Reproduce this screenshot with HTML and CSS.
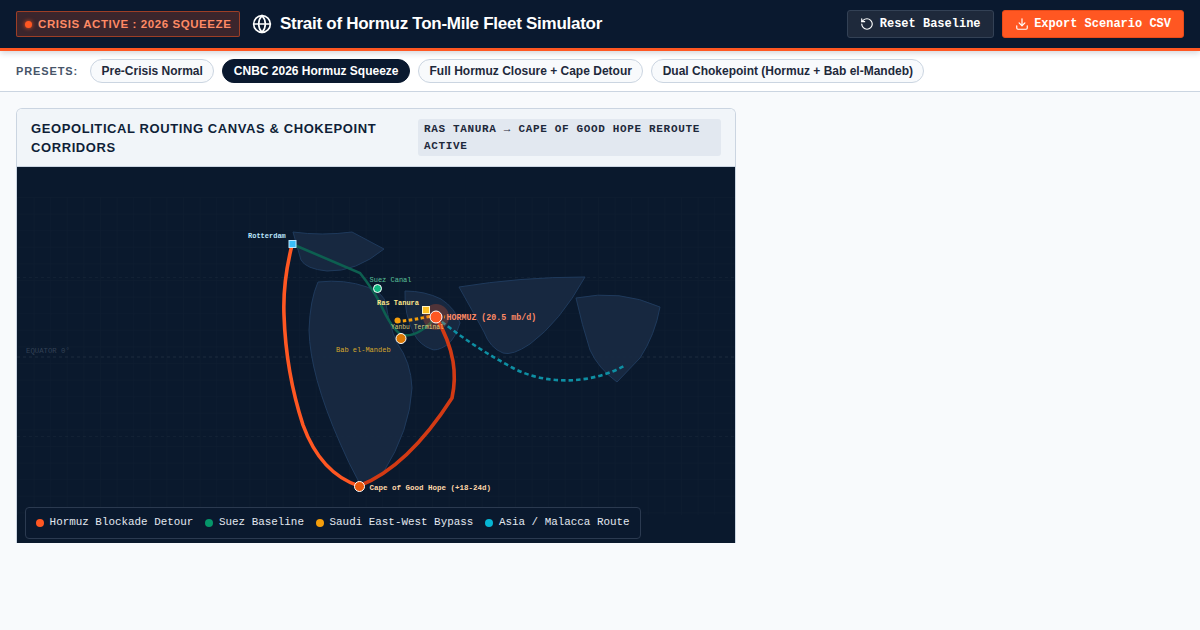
FILE: index.html
```html
<!DOCTYPE html>
<html lang="en">

<head>
    <meta charset="UTF-8" />
    <meta name="viewport" content="width=device-width, initial-scale=1.0" />
    <title>Strait of Hormuz Ton-Mile Fleet Simulator</title>
    <link rel="stylesheet" href="styles.css">
</head>

<body>

    <header class="top-bar">
        <div class="top-left">
            <span class="crisis-badge"><i class="pulse-dot"></i>CRISIS ACTIVE : 2026 SQUEEZE</span>
            <h1 class="app-title">
                <svg class="globe" viewBox="0 0 24 24" width="20" height="20" fill="none" stroke="currentColor"
                    stroke-width="2" stroke-linecap="round" stroke-linejoin="round">
                    <circle cx="12" cy="12" r="10" />
                    <path d="M12 2a14.5 14.5 0 0 0 0 20 14.5 14.5 0 0 0 0-20" />
                    <path d="M2 12h20" />
                </svg>
                Strait of Hormuz Ton-Mile Fleet Simulator
            </h1>
        </div>
        <div class="top-actions">
            <button class="btn btn-dark">
                <svg viewBox="0 0 24 24" width="14" height="14" fill="none" stroke="currentColor" stroke-width="2"
                    stroke-linecap="round" stroke-linejoin="round">
                    <path d="M3 12a9 9 0 1 0 9-9 9.75 9.75 0 0 0-6.74 2.74L3 8" />
                    <path d="M3 3v5h5" />
                </svg>
                Reset Baseline
            </button>
            <button class="btn btn-orange">
                <svg viewBox="0 0 24 24" width="14" height="14" fill="none" stroke="currentColor" stroke-width="2"
                    stroke-linecap="round" stroke-linejoin="round">
                    <path d="M21 15v4a2 2 0 0 1-2 2H5a2 2 0 0 1-2-2v-4" />
                    <path d="M7 10l5 5 5-5" />
                    <path d="M12 15V3" />
                </svg>
                Export Scenario CSV
            </button>
        </div>
    </header>

    <nav class="preset-bar">
        <span class="preset-label">PRESETS:</span>
        <button class="pill">Pre-Crisis Normal</button>
        <button class="pill active">CNBC 2026 Hormuz Squeeze</button>
        <button class="pill">Full Hormuz Closure + Cape Detour</button>
        <button class="pill">Dual Chokepoint (Hormuz + Bab el-Mandeb)</button>
    </nav>

    <main class="content">
        <section class="map-panel">
            <div class="panel-head">
                <h2>Geopolitical Routing Canvas &amp; Chokepoint Corridors</h2>
                <span class="route-tag">Ras Tanura → Cape of Good Hope Reroute Active</span>
            </div>
            <div class="map-wrap">
                <!-- viewBox follows page coordinates of the canvas -->
                <svg class="map" viewBox="17 167 718 376" width="718" height="376">
                    <defs>
                        <pattern id="grid" x="17" y="197" width="16.6" height="16.6" patternUnits="userSpaceOnUse">
                            <path d="M16.6 0H0V16.6" fill="none" stroke="#ffffff" stroke-opacity="0.018" />
                        </pattern>
                    </defs>
                    <rect x="17" y="197" width="718" height="318" fill="url(#grid)" />

                    <g class="lat-lines">
                        <path d="M17 277.5H735" />
                        <path class="equator" d="M17 357H735" />
                        <path d="M17 436.500H735" />
                    </g>
                    <text class="lbl-equator" x="26" y="353">EQUATOR 0°</text>

                    <g class="land">
                        <path d="M293 232Q322 236 352 232L384 249Q356 272 327 271Q306 269 301 260Z" />
                        <path d="M318 282Q345 279 367 287Q384 293 386 304Q389 325 397 343Q411 362 412 388Q410 430 383 473Q372 480 360 484Q348 462 340 443Q310 375 309 330Q310 300 318 282Z" />
                        <path d="M405 291Q425 291 441 299Q455 308 460 323Q455 339 447 345Q436 352 431 349Q420 345 414 334Q404 314 405 291Z" />
                        <path d="M459 287Q520 277 585 277Q560 322 530 344Q512 356 503 353Q490 348 484 332Q472 310 459 287Z" />
                        <path d="M576 298Q620 289 660 307Q655 335 640 358L617 382Q598 368 590 350Q582 325 576 298Z" />
                    </g>

                    <path class="route suez" d="M292 244L360 273Q372 288 380 303Q392 330 402 335Q418 338 436 317" />
                    <path class="route asia" d="M436 317Q470 345 513 368C545 385 590 385 626 365" />
                    <path class="route bypass" d="M397 321.500Q415 320 436 315L445 317" />
                    <path class="route detour" d="M292 245C287 265 283 290 284 315C285 345 290 385 303 425C315 458 335 478 359 486" />
                    <path class="route detour-back" d="M359 486C395 472 425 440 452 398C457 375 455 350 436 317" />

                    <circle class="halo" cx="436" cy="317" r="13" />
                    <rect class="mk mk-rott" x="289" y="240.500" width="7" height="7" />
                    <circle class="mk mk-suez" cx="377.500" cy="288.500" r="4" />
                    <rect class="mk mk-ras" x="422.500" y="306.500" width="7" height="7" />
                    <circle class="mk-yanbu" cx="397.500" cy="320.500" r="3" />
                    <circle class="mk mk-bab" cx="401" cy="338.500" r="5" />
                    <circle class="mk mk-hormuz" cx="436" cy="317" r="6" />
                    <circle class="mk mk-cape" cx="359.500" cy="486.500" r="5" />

                    <text class="lbl lbl-rott" x="248" y="238">Rotterdam</text>
                    <text class="lbl lbl-suez" x="369.500" y="282">Suez Canal</text>
                    <text class="lbl lbl-ras" x="377" y="305">Ras Tanura</text>
                    <text class="lbl lbl-yanbu" x="391" y="329">Yanbu Terminal</text>
                    <text class="lbl lbl-hormuz" x="446.500" y="320">HORMUZ (20.5 mb/d)</text>
                    <text class="lbl lbl-bab" x="336" y="352">Bab el-Mandeb</text>
                    <text class="lbl lbl-cape" x="369.500" y="490">Cape of Good Hope (+18-24d)</text>
                </svg>

                <div class="legend">
                    <span class="legend-item"><i class="dot dot-detour"></i><span class="legend-text">Hormuz Blockade Detour</span></span>
                    <span class="legend-item"><i class="dot dot-suez"></i><span class="legend-text">Suez Baseline</span></span>
                    <span class="legend-item"><i class="dot dot-bypass"></i><span class="legend-text">Saudi East-West Bypass</span></span>
                    <span class="legend-item"><i class="dot dot-asia"></i><span class="legend-text">Asia / Malacca Route</span></span>
                </div>
            </div>
        </section>
    </main>

</body>

</html>
```

FILE: styles.css
```css
* {
    box-sizing: border-box;
}

body {
    margin: 0;
    font-family: "Liberation Sans", Arial, sans-serif;
    background: #f8fafc;
    color: #0a192f;
}

.top-bar {
    height: 51px;
    padding: 0 16px;
    display: flex;
    align-items: center;
    justify-content: space-between;
    background: #0a192f;
    border-bottom: 3px solid #ff5722;
    box-shadow: 0 2px 6px rgba(15, 23, 42, 0.18);
    position: relative;
}

.top-left {
    display: flex;
    align-items: center;
    gap: 11.5px;
}

.crisis-badge {
    height: 26px;
    padding: 0 8px;
    display: flex;
    align-items: center;
    gap: 6px;
    font-size: 11.5px;
    font-weight: 700;
    letter-spacing: 0.58px;
    color: #ff8a65;
    background: rgba(255, 87, 34, 0.2);
    border: 1px solid rgba(255, 87, 34, 0.5);
    border-radius: 2px;
}

.pulse-dot {
    width: 7px;
    height: 7px;
    border-radius: 50%;
    background: #ff5722;
    box-shadow: 0 0 4px #ff5722;
}

.app-title {
    margin: 0;
    display: flex;
    align-items: center;
    gap: 8px;
    font-size: 17px;
    font-weight: 700;
    letter-spacing: -0.27px;
    color: #ffffff;
}

.top-actions {
    display: flex;
    gap: 8px;
}

.btn {
    height: 28px;
    padding: 0 12px;
    display: flex;
    align-items: center;
    gap: 5.6px;
    font-family: "Liberation Mono", monospace;
    font-size: 12px;
    font-weight: 700;
    color: #ffffff;
    border-radius: 3px;
    cursor: pointer;
}

.btn-dark {
    background: #1e293b;
    border: 1px solid #334155;
}

.btn-orange {
    background: #ff5722;
    border: 1px solid #e64a19;
}

.preset-bar {
    height: 41px;
    padding: 0 16px;
    display: flex;
    align-items: center;
    gap: 8px;
    background: #ffffff;
    border-bottom: 1px solid #cbd5e1;
}

.preset-label {
    margin-right: 4px;
    font-size: 11px;
    font-weight: 700;
    letter-spacing: 0.88px;
    color: #475569;
}

.pill {
    height: 24px;
    padding: 0 10.4px;
    font-family: "Liberation Sans", Arial, sans-serif;
    font-size: 12px;
    font-weight: 700;
    color: #1e293b;
    background: #f8fafc;
    border: 1px solid #cbd5e1;
    border-radius: 12px;
    cursor: pointer;
}

.pill.active {
    padding: 0 10.6px;
    color: #ffffff;
    background: #0a192f;
    border-color: #0a192f;
}

.content {
    padding: 16px;
}

.map-panel {
    width: 720px;
    background: #ffffff;
    border: 1px solid #cbd5e1;
    border-bottom: none;
    border-radius: 6px 6px 0 0;
    overflow: hidden;
}

.panel-head {
    height: 58px;
    padding: 0 14px;
    display: flex;
    align-items: center;
    justify-content: space-between;
    gap: 40px;
    background: #f1f5f9;
    border-bottom: 1px solid #cbd5e1;
}

.panel-head h2 {
    margin: 0;
    flex: 1;
    font-size: 13px;
    line-height: 19px;
    font-weight: 700;
    letter-spacing: 0.59px;
    text-transform: uppercase;
    color: #0f1f38;
}

.route-tag {
    width: 303px;
    flex-shrink: 0;
    padding: 2px 6px 1px;
    font-family: "Liberation Mono", monospace;
    font-size: 11px;
    line-height: 17px;
    font-weight: 700;
    letter-spacing: 0.66px;
    text-transform: uppercase;
    color: #1e293b;
    background: #e2e8f0;
    border-radius: 3px;
}

.map-wrap {
    position: relative;
    height: 376px;
    background: #0a192d;
}

.map {
    display: block;
}

.lat-lines path {
    fill: none;
    stroke: #ffffff;
    stroke-opacity: 0.035;
    stroke-dasharray: 3 3;
}

.lat-lines .equator {
    stroke-opacity: 0.08;
}

.land path {
    fill: #182a42;
    fill-opacity: 0.9;
    stroke: #1f3a5c;
    stroke-width: 1;
}

.route {
    fill: none;
}

.suez {
    stroke: #0d5f50;
    stroke-width: 2.6;
}

.asia {
    stroke: #0e8fa3;
    stroke-width: 2.6;
    stroke-dasharray: 4.5 3;
}

.bypass {
    stroke: #f59e0b;
    stroke-width: 3;
    stroke-dasharray: 3.5 2.5;
}

.detour {
    stroke: #ff5722;
    stroke-width: 3.6;
}

.detour-back {
    stroke: #d23a14;
    stroke-width: 3.6;
}

.halo {
    fill: #ff5722;
    fill-opacity: 0.25;
}

.mk {
    stroke: #ffffff;
    stroke-width: 1;
}

.mk-rott {
    fill: #38bdf8;
    stroke: #bae6fd;
}

.mk-suez {
    fill: #10b981;
}

.mk-ras {
    fill: #fbbf24;
    stroke: #fef3c7;
}

.mk-yanbu {
    fill: #f59e0b;
}

.mk-bab {
    fill: #d97706;
}

.mk-hormuz {
    fill: #ff5722;
}

.mk-cape {
    fill: #ea580c;
}

.lbl,
.lbl-equator {
    font-family: "Liberation Mono", monospace;
    font-size: 7px;
}

.lbl-equator {
    font-size: 7.300px;
    fill: #334155;
}

.lbl-rott {
    font-weight: 700;
    fill: #bae6fd;
}

.lbl-suez {
    fill: #6ee7b7;
    fill-opacity: 0.8;
}

.lbl-ras {
    font-weight: 700;
    fill: #fde68a;
}

.lbl-yanbu {
    font-size: 6.300px;
    fill: #fde68a;
    fill-opacity: 0.85;
}

.lbl-hormuz {
    font-size: 8.300px;
    font-weight: 700;
    fill: #ff8a65;
}

.lbl-bab {
    fill: #d4a72c;
}

.lbl-cape {
    font-size: 7.500px;
    font-weight: 700;
    fill: #fed7aa;
}

.legend {
    position: absolute;
    left: 8px;
    bottom: 4px;
    height: 32px;
    padding: 0 10px;
    display: flex;
    align-items: center;
    gap: 12px;
    font-family: "Liberation Mono", monospace;
    font-size: 10.9px;
    color: #e2e8f0;
    background: rgba(10, 25, 47, 0.9);
    border: 1px solid #2b3a50;
    border-radius: 4px;
}

.legend-item {
    display: flex;
    align-items: center;
    gap: 5.6px;
}

.legend-text {
    margin-bottom: 2px;
}

.dot {
    width: 8px;
    height: 8px;
    border-radius: 50%;
}

.dot-detour {
    background: #ff5722;
}

.dot-suez {
    background: #059669;
}

.dot-bypass {
    background: #f59e0b;
}

.dot-asia {
    background: #06b6d4;
}
```
